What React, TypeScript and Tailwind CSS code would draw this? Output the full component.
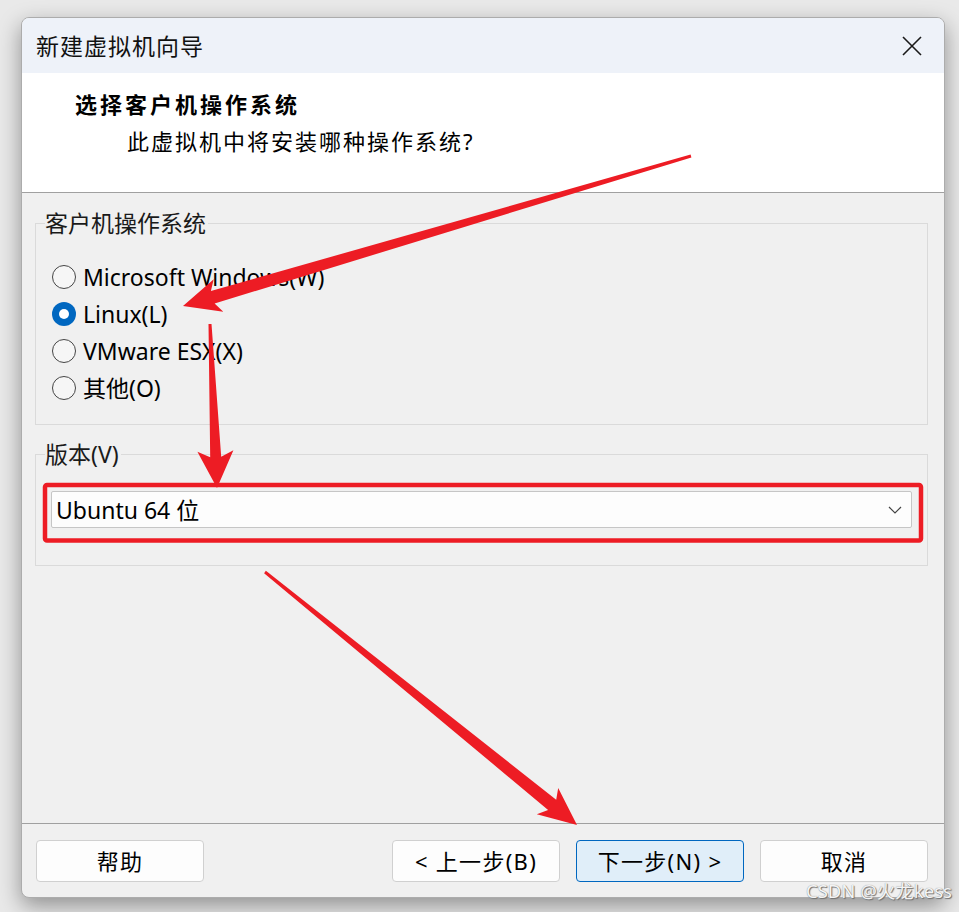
import React from "react";

type Pt = [number, number];

function arrowPoints(tail: Pt, tip: Pt, tw: number, sw: number, L: number, W: number, J: number): string {
  const dx = tip[0] - tail[0];
  const dy = tip[1] - tail[1];
  const len = Math.hypot(dx, dy);
  const ux = dx / len;
  const uy = dy / len;
  const nx = -uy;
  const ny = ux;
  const P = (back: number, off: number) =>
    `${(tip[0] - ux * back + nx * off).toFixed(1)},${(tip[1] - uy * back + ny * off).toFixed(1)}`;
  return [
    P(0, 0),
    P(L, W),
    P(J, sw / 2),
    P(len, tw / 2),
    P(len, -tw / 2),
    P(J, -sw / 2),
    P(L, -W),
  ].join(" ");
}

function Radio({ checked, label }: { checked?: boolean; label: string }) {
  return (
    <div className="flex h-[37px] items-center">
      {checked ? (
        <span className="flex h-[24px] w-[24px] items-center justify-center rounded-full bg-[#0067c0]">
          <span className="h-[10px] w-[10px] rounded-full bg-white" />
        </span>
      ) : (
        <span className="h-[24px] w-[24px] rounded-full border-[1.5px] border-[#454545] bg-[#f6f6f6]" />
      )}
      <span className="ml-[7px] text-[23px] leading-[30px] text-black">{label}</span>
    </div>
  );
}

function Btn({ children, primary }: { children: React.ReactNode; primary?: boolean }) {
  return (
    <button
      className={
        primary
          ? "flex h-[42px] w-[168px] items-center justify-center rounded-[4px] border border-[#0067c0] bg-[#e0eef9] text-[22px] tracking-[1.3px] text-black"
          : "flex h-[42px] w-[168px] items-center justify-center rounded-[4px] border border-[#d0d0d0] bg-[#fdfdfd] text-[22px] tracking-[1.3px] text-black"
      }
    >
      {children}
    </button>
  );
}

export default function App() {
  const red = "#ed1c24";
  return (
    <div className="relative h-[912px] w-[959px] overflow-hidden bg-[#e9e9e9] pl-[21px] pt-[17px] font-['Noto_Sans','Noto_Sans_CJK_SC',sans-serif]">
      <div className="flex h-[881px] w-[924px] flex-col overflow-hidden rounded-[8px] border border-[#acacac] bg-[#f0f0f0] shadow-[0_8px_22px_rgba(0,0,0,0.38)]">
        {/* title bar */}
        <div className="flex h-[55px] shrink-0 items-center justify-between bg-[#eef2f9] pl-[14px] pr-[22px]">
          <span className="text-[23px] leading-[30px] tracking-[1px] text-[#111]">新建虚拟机向导</span>
          <svg width="20" height="20" viewBox="0 0 20 20">
            <path d="M1 1 L19 19 M19 1 L1 19" stroke="#1a1a1a" strokeWidth="1.6" fill="none" />
          </svg>
        </div>
        {/* header */}
        <div className="h-[119px] shrink-0 bg-white pl-[53px] pt-[16px]">
          <div className="text-[22px] font-bold leading-[30px] tracking-[3px] text-black">选择客户机操作系统</div>
          <div className="mt-[7px] pl-[52px] text-[22px] leading-[30px] tracking-[2px] text-black">此虚拟机中将安装哪种操作系统?</div>
        </div>
        <div className="h-px shrink-0 bg-[#a0a0a0]" />
        {/* body */}
        <div className="flex-1 pl-[13px] pr-[16px]">
          <fieldset className="mt-[15px] border border-[#dadada] px-0 pb-[18px] pt-[20px]">
            <legend className="ml-[9px] pr-[2px] text-[23px] leading-[30px] text-[#1a1a1a]">客户机操作系统</legend>
            <div className="pl-[16px]">
              <Radio label="Microsoft Windows(W)" />
              <Radio checked label="Linux(L)" />
              <Radio label="VMware ESX(X)" />
              <Radio label="其他(O)" />
            </div>
          </fieldset>
          <fieldset className="mt-[14px] border border-[#dadada] px-[15px] pb-[37px] pt-[22px]">
            <legend className="ml-[-6px] pr-[2px] text-[23px] leading-[30px] text-[#1a1a1a]">版本(V)</legend>
            <div className="flex h-[37px] items-center justify-between rounded-[2px] border border-[#c6c6c6] bg-[#fdfdfd] pl-[4px] pr-[9px]">
              <span className="text-[23px] leading-[30px] text-black">Ubuntu 64 位</span>
              <svg width="14" height="8" viewBox="0 0 14 8">
                <polyline points="1,1 7,7 13,1" stroke="#444" strokeWidth="1.2" fill="none" />
              </svg>
            </div>
          </fieldset>
        </div>
        <div className="h-px shrink-0 bg-[#a0a0a0]" />
        {/* footer */}
        <div className="flex h-[73px] shrink-0 items-start justify-between pl-[14px] pr-[16px] pt-[16px]">
          <Btn>帮助</Btn>
          <div className="flex gap-[16px]">
            <Btn>&lt; 上一步(B)</Btn>
            <Btn primary>下一步(N) &gt;</Btn>
            <Btn>取消</Btn>
          </div>
        </div>
      </div>

      {/* annotations overlay */}
      <svg className="pointer-events-none absolute left-0 top-0" width="959" height="912" viewBox="0 0 959 912">
        <rect x="45" y="485" width="876" height="55.5" rx="2" fill="none" stroke={red} strokeWidth="4.5" />
        <polygon points={arrowPoints([691, 156], [183, 306], 3, 13, 37, 17, 31)} fill={red} />
        <polygon points={arrowPoints([210, 324], [217, 488], 3, 11, 37, 18, 31)} fill={red} />
        <polygon points={arrowPoints([265, 572], [577, 825], 3, 13, 38, 17, 32)} fill={red} />
      </svg>

      {/* watermark */}
      <div className="pointer-events-none absolute left-[806px] top-[879px] text-[18.5px] leading-[24px] text-[#f4f4f4] [text-shadow:1px_1px_1px_#707070,0_0_1px_#808080]">
        CSDN @火龙kess
      </div>
    </div>
  );
}
